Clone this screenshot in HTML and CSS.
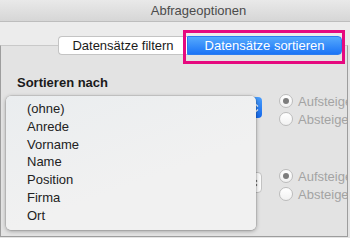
FILE: index.html
```html
<!DOCTYPE html>
<html lang="de">
<head>
<meta charset="utf-8">
<title>Abfrageoptionen</title>
<link rel="stylesheet" href="styles.css">
</head>
<body>
<div class="window">
  <div class="titlebar"><span class="title">Abfrageoptionen</span></div>
  <div class="strip"></div>
  <div class="tabbox">
    <div class="segmented">
      <div class="seg seg-off">Datensätze filtern</div>
      <div class="seg seg-on">Datensätze sortieren</div>
      <div class="highlight"></div>
    </div>

    <div class="section first">
      <div class="heading">Sortieren nach</div>
      <div class="row">
        <div class="select select-blue">
          <svg class="arrows" width="6" height="10" viewBox="0 0 6 10"><path d="M1 3.5 L3 1.5 L5 3.5 M1 6.5 L3 8.5 L5 6.5" fill="none" stroke="#fff" stroke-width="1.2"/></svg>
        </div>
        <div class="radios">
          <div class="radio"><span class="circle checked"></span>Aufsteigend</div>
          <div class="radio"><span class="circle"></span>Absteigend</div>
        </div>
      </div>
    </div>

    <div class="section">
      <div class="heading-space"></div>
      <div class="row">
        <div class="select select-plain">
          <svg class="arrows" width="6" height="10" viewBox="0 0 6 10"><path d="M1 3.5 L3 1.5 L5 3.5 M1 6.5 L3 8.5 L5 6.5" fill="none" stroke="#555" stroke-width="1.2"/></svg>
        </div>
        <div class="radios">
          <div class="radio"><span class="circle checked"></span>Aufsteigend</div>
          <div class="radio"><span class="circle"></span>Absteigend</div>
        </div>
      </div>
    </div>
  </div>

  <ul class="menu">
    <li>(ohne)</li>
    <li>Anrede</li>
    <li>Vorname</li>
    <li>Name</li>
    <li>Position</li>
    <li>Firma</li>
    <li>Ort</li>
  </ul>
</div>
</body>
</html>
```

FILE: styles.css
```css
* { box-sizing: border-box; }

html, body {
  margin: 0;
  padding: 0;
  background: #e4e4e4;
}

body {
  font-family: "Liberation Sans", Arial, sans-serif;
  font-size: 13px;
  color: #1f1f1f;
}

.window {
  position: relative;
  width: 350px;
  height: 238px;
  overflow: hidden;
  display: flex;
  flex-direction: column;
  background: #e4e4e4;
}

.titlebar {
  height: 22px;
  flex: none;
  display: flex;
  align-items: center;
  justify-content: center;
  padding-left: 47px;
  background: linear-gradient(#e9e9e9, #d6d6d6);
  border-bottom: 1px solid #bdbdbd;
}

.title {
  color: #4b4b4b;
  font-size: 13px;
  line-height: 16px;
}

.strip {
  height: 23px;
  flex: none;
  background: #ececec;
}

.tabbox {
  height: 192px;
  flex: none;
  margin-right: 2px;
  background: #e3e3e3;
  border-top: 1px solid #c9c9c9;
  border-left: 1px solid #9d9d9d;
  border-right: 1px solid #9d9d9d;
  border-bottom: 1px solid #9d9d9d;
  padding-left: 16px;
}

.segmented {
  position: relative;
  display: flex;
  margin-top: -10px;
  margin-left: 41px;
  height: 19px;
}

.seg {
  height: 19px;
  line-height: 17px;
  font-size: 13px;
  text-align: center;
}

.seg-off {
  width: 129px;
  background: #ffffff;
  border: 1px solid #c4c4c4;
  border-right: none;
  border-radius: 4px 0 0 4px;
  color: #1a1a1a;
}

.seg-on {
  width: 155px;
  background: linear-gradient(#55a9fd, #1b74f6);
  border: 1px solid #2b7cf0;
  border-radius: 0 4px 4px 0;
  color: #ffffff;
}

.highlight {
  position: absolute;
  left: 125px;
  top: -6px;
  width: 162px;
  height: 34px;
  border: 3px solid #e6097f;
}

.section {
  margin-top: 22px;
}

.section.first {
  margin-top: 20px;
}

.heading {
  font-weight: bold;
  font-size: 13px;
  line-height: 16px;
  color: #1a1a1a;
}

.heading-space {
  height: 16px;
}

.row {
  display: flex;
  align-items: flex-start;
  margin-top: 6px;
  height: 31px;
}

.select {
  width: 245px;
  height: 21px;
  flex: none;
  border-radius: 4px;
  display: flex;
  align-items: center;
  justify-content: flex-end;
  padding-right: 3px;
}

.select-blue {
  background: linear-gradient(#4a9efc, #1468ec);
}

.select-plain {
  background: #fbfbfb;
  border: 1px solid #c2c2c2;
}

.arrows {
  display: block;
}

.radios {
  margin-left: 17px;
  margin-top: -5px;
  display: flex;
  flex-direction: column;
  flex: 1;
  min-width: 0;
  overflow: hidden;
}

.radio {
  height: 18px;
  display: flex;
  align-items: center;
  color: #a3a3a3;
  font-size: 13px;
  white-space: nowrap;
}

.circle {
  width: 14px;
  height: 14px;
  flex: none;
  border-radius: 50%;
  border: 1px solid #bcbcbc;
  background: linear-gradient(#ffffff, #f1f1f1);
  margin-right: 5px;
  display: flex;
  align-items: center;
  justify-content: center;
}

.circle.checked::after {
  content: "";
  width: 6px;
  height: 6px;
  border-radius: 50%;
  background: #7d7d7d;
}

.menu {
  position: absolute;
  left: 6px;
  top: 96px;
  width: 250px;
  height: 134px;
  margin: 0;
  padding: 4px 0 0 21px;
  list-style: none;
  border-radius: 5px;
  background: linear-gradient(160deg, #eaedef, #f1f1f1 60%);
  box-shadow: 0 1px 4px rgba(0, 0, 0, 0.35), 0 0 0 0.5px rgba(0, 0, 0, 0.15);
}

.menu li {
  line-height: 17.8px;
  font-size: 13px;
  color: #222222;
}
```
